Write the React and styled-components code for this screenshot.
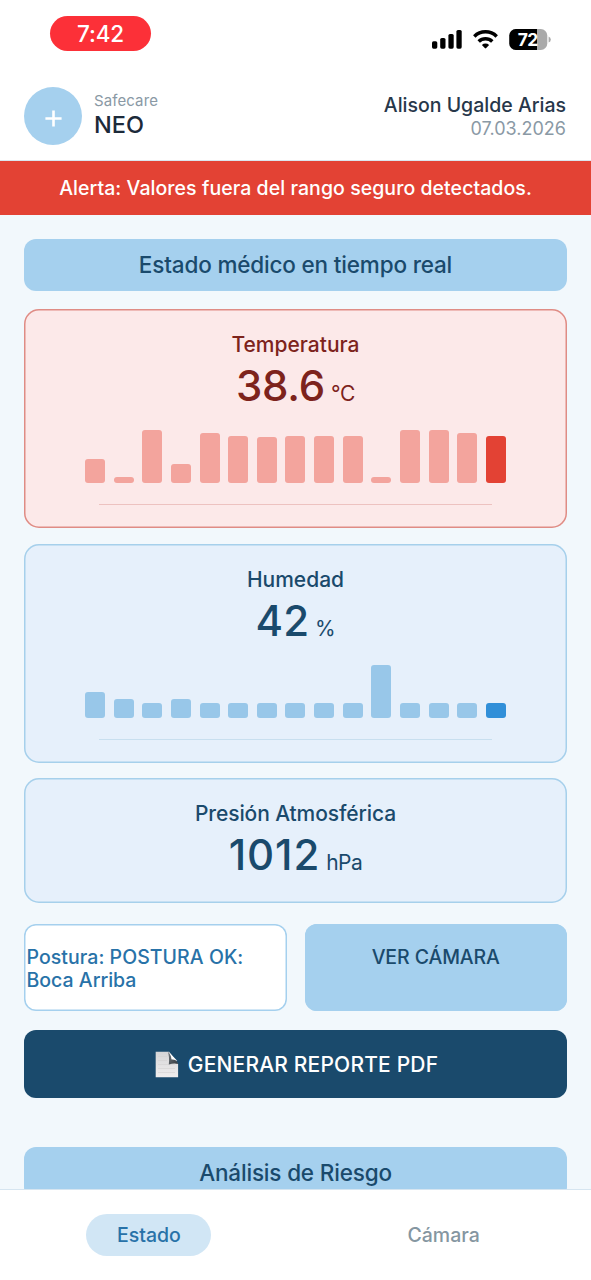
import styled, { createGlobalStyle } from "styled-components";

const GlobalStyle = createGlobalStyle`
  * {
    box-sizing: border-box;
  }

  body {
    margin: 0;
    background: #f2f8fc;
    font-family: "Inter", "Liberation Sans", sans-serif;
    overflow: hidden;
  }
`;

const Screen = styled.div`
  width: 591px;
  height: 1280px;
  display: flex;
  flex-direction: column;
  overflow: hidden;
`;

const Text = styled.span`
  display: block;
  font-size: ${(props) => props.$size}px;
  font-weight: ${(props) => props.$weight || 500};
  line-height: ${(props) => props.$line}px;
  letter-spacing: ${(props) => props.$track || 0}px;
  color: ${(props) => props.$color || "inherit"};
  white-space: nowrap;
`;

const StatusBar = styled.div`
  height: 71px;
  flex: none;
  display: flex;
  justify-content: space-between;
  align-items: flex-start;
  padding: 16px 40px 0 50px;
  background: #fff;
`;

const TimePill = styled.div`
  width: 101px;
  height: 35px;
  display: flex;
  justify-content: center;
  border-radius: 18px;
  background: #fc3038;
`;

const StatusIcons = styled.div`
  display: flex;
  align-items: center;
  padding-top: 11px;
`;

const Header = styled.header`
  height: 90px;
  flex: none;
  display: flex;
  justify-content: space-between;
  padding: 16px 25px 0 24px;
  border-bottom: 1px solid #dbe6ee;
  background: #fff;
`;

const Brand = styled.div`
  display: flex;
  gap: 12px;
`;

const Logo = styled.div`
  width: 58px;
  height: 58px;
  display: flex;
  justify-content: center;
  align-items: center;
  padding-top: 4px;
  border-radius: 50%;
  background: #a5d0ee;
`;

const BrandName = styled.div`
  padding-top: 4px;
`;

const Patient = styled.div`
  padding-top: 6px;
  text-align: right;
`;

const Alert = styled.div`
  height: 54px;
  flex: none;
  display: flex;
  justify-content: center;
  align-items: center;
  color: #fff;
  background: #e34234;
`;

const Content = styled.main`
  flex: 1;
  min-height: 0;
  overflow: hidden;
  padding: 24px 24px 0;
`;

const SectionTitle = styled.div`
  height: 52px;
  display: flex;
  justify-content: center;
  align-items: center;
  border-radius: 12px;
  color: #1a4a6c;
  background: #a5d0ee;
`;

const Card = styled.section`
  height: ${(props) => props.$height}px;
  margin-top: ${(props) => props.$gap}px;
  padding-top: 23px;
  display: flex;
  flex-direction: column;
  align-items: center;
  border-radius: 15px;
  box-shadow: inset 0 0 0 1.5px ${(props) => (props.$danger ? "#df8c85" : "#a6d0eb")};
  color: ${(props) => (props.$danger ? "#7d231c" : "#1a4a6c")};
  background: ${(props) => (props.$danger ? "#fce9e9" : "#e6f0fb")};
`;

const Reading = styled.div`
  display: flex;
  align-items: baseline;
  gap: 6px;
  margin-top: 1px;
`;

const Bars = styled.div`
  width: 421px;
  height: 53px;
  margin-top: 17px;
  display: flex;
  justify-content: space-between;
  align-items: flex-end;
`;

const Bar = styled.div`
  width: 20px;
  border-radius: 3px;
  background: ${(props) => props.$color};
`;

const Axis = styled.div`
  width: 393px;
  height: 1px;
  margin-top: 21px;
  background: ${(props) => props.$color};
`;

const ActionRow = styled.div`
  display: grid;
  grid-template-columns: 1fr 1fr;
  gap: 18px;
  margin-top: 21px;
`;

const Action = styled.div`
  height: 87px;
  padding: ${(props) => (props.$filled ? "22px 0 0" : "22px 0 0 2.5px")};
  border-radius: 12px;
  box-shadow: inset 0 0 0 1.5px #a5d0ee;
  text-align: ${(props) => (props.$filled ? "center" : "left")};
  color: ${(props) => (props.$filled ? "#1a4a6c" : "#2872a8")};
  background: ${(props) => (props.$filled ? "#a5d0ee" : "#fff")};
`;

const ReportButton = styled.button`
  width: 100%;
  height: 68px;
  margin: 19px 0 49px;
  padding: 1px 0 0 2px;
  display: flex;
  justify-content: center;
  align-items: center;
  gap: 9px;
  border: 0;
  border-radius: 12px;
  font-family: inherit;
  color: #fff;
  background: #1a4a6c;
`;

const TabBar = styled.nav`
  height: 91px;
  flex: none;
  display: grid;
  grid-template-columns: 1fr 1fr;
  justify-items: center;
  align-items: start;
  padding: 24px 0 0 1.5px;
  border-top: 1px solid #d6e5f0;
  background: #fff;
`;

const Tab = styled.div`
  width: 125px;
  height: 42px;
  display: flex;
  justify-content: center;
  align-items: center;
  border-radius: 21px;
  color: ${(props) => (props.$active ? "#2872a8" : "#8596a1")};
  background: ${(props) => (props.$active ? "#d1e6f5" : "transparent")};
`;

const temperature = [24, 6, 53, 19.5, 50.5, 47.5, 46.5, 47.5, 47.5, 47.5, 6, 53, 53, 50.5, 47.5];
const humidity = [26.5, 19.5, 15.5, 19.5, 15.5, 15.5, 15.5, 15.5, 15.5, 15.5, 53, 15.5, 15.5, 15.5, 15.5];

function Chart({ values, color, current, axis }) {
  return (
    <>
      <Bars>
        {values.map((value, i) => (
          <Bar key={i} $color={i === values.length - 1 ? current : color} style={{ height: value }} />
        ))}
      </Bars>
      <Axis $color={axis} />
    </>
  );
}

function Signals() {
  return (
    <svg width="119" height="24" viewBox="432 27 119 24">
      <rect x="432" y="41.3" width="5.3" height="7.4" rx="1.6" />
      <rect x="440.2" y="38" width="5.3" height="10.7" rx="1.6" />
      <rect x="448.4" y="34" width="5.3" height="14.7" rx="1.6" />
      <rect x="456.4" y="30" width="5.3" height="18.7" rx="1.6" />
      <g fill="none" stroke="#000" strokeWidth="3.5">
        <path d="M474.3 36.4a16 16 0 0 1 22.4 0" />
        <path d="M478.7 41.4a9.8 9.8 0 0 1 13.6 0" />
      </g>
      <path d="M481.9 44.9a5.1 5.1 0 0 1 7.2 0l-2.9 3.2q-.7.8-1.4 0z" />
      <defs>
        <clipPath id="battery">
          <rect x="509.3" y="29" width="38" height="21" rx="6.5" />
        </clipPath>
      </defs>
      <g clipPath="url(#battery)">
        <rect x="509" y="29" width="39" height="21" fill="#aaa" />
        <rect x="509" y="29" width="28" height="21" />
      </g>
      <path d="M548.6 36.4q2.2.8 2.2 3.1t-2.2 3.1z" fill="#aaa" />
      <text x="527.8" y="45.8" textAnchor="middle" fontSize="17.5" fontWeight="700" letterSpacing="-.6" fill="#fff">
        72
      </text>
    </svg>
  );
}

function PageIcon() {
  return (
    <svg width="24" height="27" viewBox="0 0 24 27">
      <defs>
        <linearGradient id="paper" x2="0" y2="1">
          <stop stopColor="#d5d5d7" />
          <stop offset="1" stopColor="#f0eeee" />
        </linearGradient>
        <linearGradient id="fold" x2="1" y2="1">
          <stop stopColor="#777e83" />
          <stop offset="1" stopColor="#33393e" />
        </linearGradient>
      </defs>
      <path d="M.7.8h13.5L23.1 13v13.3H.7z" fill="url(#paper)" />
      <path d="M3 5.5h9M3 9.5h9M3 13.5h17M3 17.5h17M3 21.5h17" stroke="#d3d2d2" strokeWidth=".6" />
      <path d="M14.6 1.8L22.4 9.9l-6.2-1.3z" fill="#fff" />
      <path d="M12.8.8Q16 3.2 16.5 8.6q5-.4 6.6 4.4-4-1-9.3.4Q14.7 5.5 12.8.8z" fill="url(#fold)" />
    </svg>
  );
}

export default function App() {
  return (
    <>
      <GlobalStyle />
      <Screen>
        <StatusBar>
          <TimePill>
            <Text $size={22.5} $line={36} $track={-0.1} $color="#fff">7:42</Text>
          </TimePill>
          <StatusIcons>
            <Signals />
          </StatusIcons>
        </StatusBar>
        <Header>
          <Brand>
            <Logo>
              <svg width="17" height="17" viewBox="0 0 17 17" stroke="#fff" strokeWidth="2.6">
                <path d="M8.5 .4v16.2M.4 8.5h16.2" />
              </svg>
            </Logo>
            <BrandName>
              <Text $size={15} $line={20} $weight={400} $track={0.1} $color="#8a99a5">Safecare</Text>
              <Text $size={23.5} $line={28} $color="#1c2a3a">NEO</Text>
            </BrandName>
          </Brand>
          <Patient>
            <Text $size={19.5} $line={24} $color="#27374a">Alison Ugalde Arias</Text>
            <Text $size={18} $line={23} $weight={400} $color="#8a99a5">07.03.2026</Text>
          </Patient>
        </Header>
        <Alert>
          <Text $size={19.5} $line={24} $track={0.06}>Alerta: Valores fuera del rango seguro detectados.</Text>
        </Alert>
        <Content>
          <SectionTitle>
            <Text $size={22.5} $line={28} $track={-0.17}>Estado médico en tiempo real</Text>
          </SectionTitle>
          <Card $height={219} $gap={18} $danger>
            <Text $size={21} $line={26}>Temperatura</Text>
            <Reading>
              <Text $size={42} $line={54} $track={-0.2}>38.6</Text>
              <Text $size={21} $line={26} $weight={400} $track={-0.3}>°C</Text>
            </Reading>
            <Chart values={temperature} color="#f3a49d" current="#e34234" axis="#edc2c0" />
          </Card>
          <Card $height={219} $gap={16}>
            <Text $size={21} $line={26}>Humedad</Text>
            <Reading>
              <Text $size={42} $line={54}>42</Text>
              <Text $size={21} $line={26} $weight={400} $track={-0.3}>%</Text>
            </Reading>
            <Chart values={humidity} color="#98c7e9" current="#318fd8" axis="#c8dfef" />
          </Card>
          <Card $height={125} $gap={15}>
            <Text $size={21} $line={26} $track={-0.1}>Presión Atmosférica</Text>
            <Reading>
              <Text $size={42} $line={54} $track={0.9}>1012</Text>
              <Text $size={21} $line={26} $weight={400} $track={-0.5}>hPa</Text>
            </Reading>
          </Card>
          <ActionRow>
            <Action>
              <Text $size={19.5} $line={23} $track={0.05}>Postura: POSTURA OK:</Text>
              <Text $size={19.5} $line={23}>Boca Arriba</Text>
            </Action>
            <Action $filled>
              <Text $size={19.5} $line={23} $track={-0.1}>VER CÁMARA</Text>
            </Action>
          </ActionRow>
          <ReportButton>
            <PageIcon />
            <Text $size={21} $line={26} $track={0.18}>GENERAR REPORTE PDF</Text>
          </ReportButton>
          <SectionTitle>
            <Text $size={22.5} $line={28} $track={-0.17}>Análisis de Riesgo</Text>
          </SectionTitle>
        </Content>
        <TabBar>
          <Tab $active>
            <Text $size={19.5} $line={24}>Estado</Text>
          </Tab>
          <Tab>
            <Text $size={19.5} $line={24}>Cámara</Text>
          </Tab>
        </TabBar>
      </Screen>
    </>
  );
}
